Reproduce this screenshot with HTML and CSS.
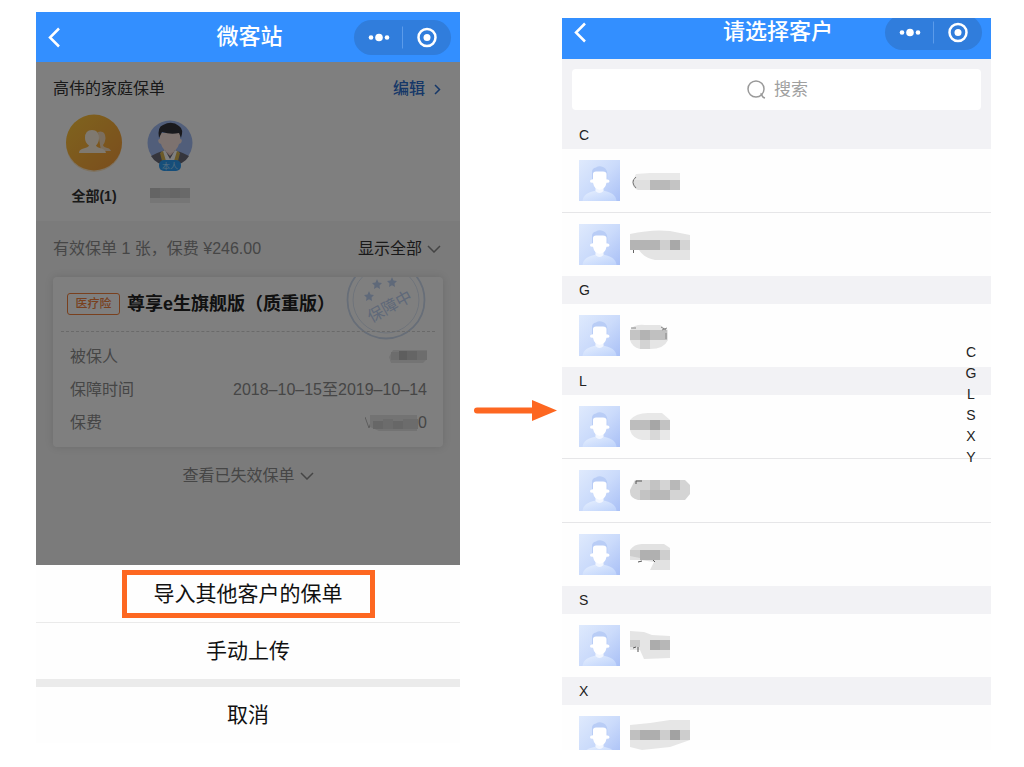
FILE: index.html
```html
<!DOCTYPE html>
<html lang="zh-CN">
<head>
<meta charset="utf-8">
<meta name="viewport" content="width=device-width, initial-scale=1">
<title>微客站</title>
<link rel="stylesheet" href="styles.css">
</head>
<body>
<svg class="defs" width="0" height="0" aria-hidden="true">
  <defs>
    <linearGradient id="g-bg" x1="0" y1="0" x2="1" y2="1"><stop offset="0" stop-color="#dfeafd"/><stop offset=".5" stop-color="#cbdbfb"/><stop offset="1" stop-color="#a9c0f6"/></linearGradient>
    <linearGradient id="g-body" x1="0" y1="0" x2="1" y2="1"><stop offset="0" stop-color="#e6effe"/><stop offset="1" stop-color="#bdd2fb"/></linearGradient>
    <linearGradient id="g-gold" x1="0" y1="0" x2="1" y2="1"><stop offset="0" stop-color="#ffc83c"/><stop offset="1" stop-color="#f59a3a"/></linearGradient>
    <symbol id="avatar" viewBox="0 0 41 41">
      <rect width="41" height="41" fill="url(#g-bg)"/>
      <path d="M13 19V12Q13 8 17 7.500Q20 5.500 24 7Q29 8 28.500 19Z" fill="#b9cdf6"/>
      <path d="M3.500 41C4 35 9 32 17 30.500H24C32 32 37 35 37.500 41Z" fill="url(#g-body)"/>
      <path d="M16.500 26H24.500V31Q20.500 35 16.500 31Z" fill="#f3f7ff"/>
      <path d="M14 14Q14 11.500 17 11.500H24Q27.500 11.500 27.500 14V19.500Q30.500 19 30.500 21.200Q30.500 23 27.500 22.800Q27 26 25 28Q20.500 31.500 16.500 28Q14.500 26 14 22.800Q11 23 11 21.200Q11 19 14 19.500Z" fill="#fff"/>
    </symbol>
    <symbol id="capsule" viewBox="0 0 97 35">
      <circle cx="17" cy="17.500" r="2.300"/><circle cx="25" cy="17.500" r="3.800"/><circle cx="33" cy="17.500" r="2.300"/>
      <path d="M48.500 6.500V28.500" stroke="#5b9bea"/>
      <circle cx="73" cy="17.500" r="8.500" fill="none" stroke="#fff" stroke-width="2.500"/><circle cx="73" cy="17.500" r="3.500"/>
    </symbol>
    <symbol id="chevron" viewBox="0 0 14 8"><path d="M1 1L7 7L13 1" fill="none" stroke="currentColor" stroke-width="1.500"/></symbol>
  </defs>
</svg>
<main class="stage">
  <section class="phone phone-left">
    <header class="bar">
      <button class="back" aria-label="返回"><svg width="13" height="21" viewBox="0 0 13 21"><path d="M11 1.500L2 10.500L11 19.500" fill="none" stroke="#fff" stroke-width="2.500"/></svg></button>
      <h1 class="bar-title">微客站</h1>
      <button class="capsule" aria-label="更多"><svg width="97" height="35" fill="#fff"><use href="#capsule"/></svg></button>
    </header>
    <div class="dimmed">
      <div class="family">
        <div class="family-head">
          <h2 class="family-title">高伟的家庭保单</h2>
          <a class="edit" href="#edit">编辑 <svg width="7" height="11" viewBox="0 0 7 11"><path d="M1 1L5.500 5.500L1 10" fill="none" stroke="currentColor" stroke-width="1.500"/></svg></a>
        </div>
        <div class="members">
          <button class="member">
            <svg width="58" height="58" viewBox="0 0 58 58">
              <circle cx="29" cy="30" r="28" fill="#f8b850" opacity=".35"/>
              <circle cx="29" cy="28.500" r="28" fill="url(#g-gold)"/>
              <path d="M33 18Q40 16 40.500 24Q40 29 38 31Q38 33 44 34.500Q46 36 46 37H36Z" fill="#f7ddbc"/>
              <path d="M27 16Q34 16 34 24Q34 29 31 31.500Q31 33 38 35Q41 37 41 39H14Q14 36 17 35Q24 33 24 31.500Q20 29 20 24Q20 16 27 16Z" fill="#fff3e0"/>
            </svg>
            <span class="member-name">全部(1)</span>
          </button>
          <button class="member" aria-label="本人">
            <svg width="58" height="58" viewBox="0 0 58 58">
              <circle cx="29" cy="29" r="22.500" fill="#a3bdf5"/>
              <path d="M10 42Q18 38 24 36H34Q40 38 48 42Q43 51 29 52Q15 51 10 42Z" fill="#6b6b78"/>
              <path d="M20 38L24 36L29 45L34 36L38 38L34 50H24Z" fill="#fff"/>
              <path d="M19 39L22 37L25 47H21ZM39 39L36 37L33 47H37Z" fill="#d8b550"/>
              <path d="M25 33H33V38L29 42L25 38Z" fill="#f3d0c8"/>
              <path d="M19 19H39V25Q42 25 40 29L38 30Q36 37 29 39Q22 37 20 30L18 29Q16 25 19 25Z" fill="#fbe5df"/>
              <path d="M18 24Q16 13 22 11Q31 6 38 12Q43 15 40 24L38 19Q30 21 21 18Z" fill="#33333b"/>
              <rect x="18" y="46" width="22" height="11" rx="5" fill="#2d9cf4"/>
              <text class="self" x="29" y="55" text-anchor="middle">本人</text>
            </svg>
            <svg class="pix" width="40" height="18" viewBox="0 0 40 18"><path fill="#c8c8c8" d="M0 2H10V12H0Z"/><path fill="#d2d2d2" d="M10 2H20V12H10ZM30 2H40V12H30Z"/><path fill="#cdcdcd" d="M20 2H30V12H20Z"/><path fill="#ececec" d="M0 12H40V17H0Z"/></svg>
          </button>
        </div>
      </div>
      <div class="policies">
        <div class="summary"><p class="muted">有效保单 1 张，保费 ¥246.00</p><button class="filter">显示全部 <svg width="14" height="8"><use href="#chevron"/></svg></button></div>
        <article class="card">
          <svg class="stamp" width="80" height="80" viewBox="0 0 80 80">
            <g fill="none" stroke="#cfdcf0"><circle cx="40" cy="40" r="38.500" stroke-width="1.800"/><circle cx="40" cy="40" r="33" stroke-width=".7"/></g>
            <g fill="#bfd2f2"><path id="star" d="M0-5L1.500-1.500L5-1L2.500 1.500L3 5L0 3.300L-3 5L-2.500 1.500L-5-1L-1.500-1.500Z" transform="translate(23 36)"/><use href="#star" x="8" y="-12"/><use href="#star" x="23" y="-14"/><text class="stamp-text" x="44" y="52" text-anchor="middle" transform="rotate(-29 44 47)">保障中</text></g>
          </svg>
          <div class="card-head"><span class="tag">医疗险</span><h3 class="card-title">尊享e生旗舰版（质重版）</h3></div>
          <dl class="facts">
            <div class="fact"><dt>被保人</dt><dd><svg class="pix" width="38" height="16" viewBox="0 0 38 16"><path fill="#e8e8e8" d="M4 1H38V10L34 14H2L0 8Z"/><path fill="#dadada" d="M2 3H10V11H2ZM28 2H38V11H28Z"/><path fill="#bcbcbc" d="M10 2H18V11H10Z"/><path fill="#cacaca" d="M18 2H28V11H18Z"/></svg></dd></div>
            <div class="fact"><dt>保障时间</dt><dd>2018–10–15至2019–10–14</dd></div>
            <div class="fact"><dt>保费</dt><dd class="fee"><svg class="pix" width="53" height="16" viewBox="0 0 53 16"><path d="M0 2L4 13L7 4" fill="none" stroke="#bbb"/><path fill="#e6e6e6" d="M5 0H52V16H14L5 12Z"/><path fill="#cecece" d="M8 6H18V14H8ZM28 6H38V14H28Z"/><path fill="#d8d8d8" d="M18 4H28V14H18ZM38 4H53V14H38Z"/></svg><span>0</span></dd></div>
          </dl>
        </article>
        <button class="expired">查看已失效保单 <svg width="14" height="8"><use href="#chevron"/></svg></button>
      </div>
    </div>
    <div class="sheet">
      <button class="option"><span class="callout">导入其他客户的保单</span></button>
      <button class="option">手动上传</button>
      <button class="option cancel">取消</button>
    </div>
  </section>

  <div class="arrow"><svg width="84" height="21" viewBox="0 0 84 21" aria-hidden="true"><path d="M4 10.500H62" stroke="#fd6721" stroke-width="6" stroke-linecap="round"/><path d="M59 0L84 10.500L59 21Z" fill="#fd6721"/></svg></div>

  <section class="phone phone-right">
    <header class="bar bar-cut">
      <button class="back" aria-label="返回"><svg width="13" height="21" viewBox="0 0 13 21"><path d="M11 1.500L2 10.500L11 19.500" fill="none" stroke="#fff" stroke-width="2.500"/></svg></button>
      <h1 class="bar-title">请选择客户</h1>
      <button class="capsule" aria-label="更多"><svg width="97" height="35" fill="#fff"><use href="#capsule"/></svg></button>
    </header>
    <div class="search-area">
      <label class="search">
        <svg width="19" height="19" viewBox="0 0 19 19" fill="none" stroke="#999" stroke-width="1.500"><circle cx="9" cy="9" r="8"/><path d="M13.500 13.500Q14.500 14 15 15.500Q15.500 17.500 18 18"/></svg>
        <input class="search-input" type="text" placeholder="搜索" aria-label="搜索">
      </label>
    </div>
    <h2 class="letter" id="C">C</h2>
    <ul class="clients">
      <li class="client"><svg class="avatar"><use href="#avatar"/></svg><svg class="pix" width="60" height="41" viewBox="0 0 60 41"><path fill="#e9e9e9" d="M6 14L20 13H50V20H3Z"/><path fill="#e0e0e0" d="M3 20H20V30H8Q2 28 2 20Z"/><path fill="#b9b9b9" d="M20 20H40V30H20Z"/><path fill="#c4c4c4" d="M40 20H50V30H40Z"/><path d="M6 17Q0 22 6 28" stroke="#777" fill="none"/></svg></li>
      <li class="client"><svg class="avatar"><use href="#avatar"/></svg><svg class="pix" width="60" height="41" viewBox="0 0 60 41"><path fill="#e4e4e4" d="M0 10Q22 5 40 7L60 11V16H0ZM9 26H60V36H25Q14 34 9 26Z"/><path fill="#b4b4b4" d="M0 16H30V26H0Z"/><path fill="#cfcfcf" d="M30 16H40V26H30Z"/><path fill="#a8a8a8" d="M40 16H50V26H40Z"/><path fill="#d4d4d4" d="M50 16H60V26H50Z"/><path d="M3.500 26V29" stroke="#666"/></svg></li>
    </ul>
    <h2 class="letter" id="G">G</h2>
    <ul class="clients">
      <li class="client"><svg class="avatar"><use href="#avatar"/></svg><svg class="pix" width="60" height="41" viewBox="0 0 60 41"><path fill="#e5e5e5" d="M0 15Q4 9 15 10H30L38 15V25Q34 34 20 34H10Q2 32 0 25Z"/><path fill="#c4c4c4" d="M0 15H10V25H0Z"/><path fill="#b3b3b3" d="M10 15H20V25H10Z"/><path fill="#c0c0c0" d="M20 15H37V25H20Z"/><path fill="#d3d3d3" d="M10 25H20V34H10Z"/><path d="M1 13H6M31 12L36 15M32 15L37 13M36 18V24" stroke="#888"/></svg></li>
    </ul>
    <h2 class="letter" id="L">L</h2>
    <ul class="clients">
      <li class="client"><svg class="avatar"><use href="#avatar"/></svg><svg class="pix" width="60" height="41" viewBox="0 0 60 41"><path fill="#e8e8e8" d="M0 14Q6 7 18 7H32L40 14V34H12Q2 32 0 24Z"/><path fill="#bdbdbd" d="M0 14H20V24H0Z"/><path fill="#a6a6a6" d="M20 14H30V24H20Z"/><path fill="#c2c2c2" d="M30 14H40V24H30Z"/><path fill="#d8d8d8" d="M20 24H30V34H20Z"/></svg></li>
      <li class="client"><svg class="avatar"><use href="#avatar"/></svg><svg class="pix" width="60" height="41" viewBox="0 0 60 41"><path fill="#d4d4d4" d="M5 10H55L60 15V24L55 30H8Q0 28 0 22V20Z"/><path fill="#c3c3c3" d="M20 10H30V20H20ZM10 20H20V30H10Z"/><path fill="#b8b8b8" d="M40 10H50V20H40ZM20 20H40V30H20Z"/><path d="M6 14V11H12" stroke="#555" fill="none"/></svg></li>
      <li class="client"><svg class="avatar"><use href="#avatar"/></svg><svg class="pix" width="60" height="41" viewBox="0 0 60 41"><path fill="#e2e2e2" d="M0 16Q4 10 12 10H34L40 14V36H20L24 28L10 26H0Z"/><path fill="#cecece" d="M0 16H10V24L0 22ZM30 16H40V26H30Z"/><path fill="#b0b0b0" d="M10 16H30V26H10Z"/><path d="M8 28L12 27M23 26L25 28" stroke="#555"/></svg></li>
    </ul>
    <h2 class="letter" id="S">S</h2>
    <ul class="clients">
      <li class="client"><svg class="avatar"><use href="#avatar"/></svg><svg class="pix" width="60" height="41" viewBox="0 0 60 41"><path fill="#e5e5e5" d="M0 6L14 7L22 10L40 11V33L14 34L10 25H0Z"/><path fill="#cacaca" d="M0 15H10V22H0Z"/><path fill="#acacac" d="M20 15H30V25H20Z"/><path fill="#b7b7b7" d="M30 15H40V25H30Z"/><path d="M3 23L6 22M8 22V27" stroke="#555"/></svg></li>
    </ul>
    <h2 class="letter" id="X">X</h2>
    <ul class="clients">
      <li class="client client-cut"><svg class="avatar"><use href="#avatar"/></svg><svg class="pix" width="60" height="41" viewBox="0 0 60 41"><path fill="#e6e6e6" d="M0 9L20 7L40 4H60V24L40 31L12 34L0 31Z"/><path fill="#c0c0c0" d="M0 14H10V24H0Z"/><path fill="#aeaeae" d="M10 14H30V24H10Z"/><path fill="#cdcdcd" d="M30 14H40V24H30ZM50 14H60V24H50Z"/><path fill="#a2a2a2" d="M40 14H50V24H40Z"/></svg></li>
    </ul>
    <nav class="index" aria-label="字母索引"><a href="#C">C</a><a href="#G">G</a><a href="#L">L</a><a href="#S">S</a><a href="#X">X</a><a href="#Y">Y</a></nav>
  </section>
</main>
</body>
</html>
```
FILE: styles.css
```css
* { box-sizing: border-box; }
body { margin: 0; background: #fff; color: #222; font: 16px/24px "Liberation Sans", "Noto Sans CJK SC", sans-serif; }
h1, h2, h3, p, ul, dl, dd { margin: 0; padding: 0; font-weight: 400; }
ul { list-style: none; }
button { border: 0; padding: 0; background: none; font: inherit; color: inherit; cursor: pointer; }
a { color: inherit; text-decoration: none; }
svg { display: block; flex: none; }
.defs { position: absolute; }

.stage { display: grid; grid-template-columns: 424fr 102px 429fr; align-items: start; padding: 0 33px 16px 36px; }
.phone { position: relative; min-width: 0; }
.phone-left { margin-top: 12px; }
.phone-right { margin-top: 18px; background: #fefefe; }
.arrow { display: flex; justify-content: flex-end; padding: 400px 5px 0 0; }

.bar { display: grid; grid-template-columns: 1fr auto 1fr; align-items: center; height: 50px; padding: 0 9px 0 12px; background: #338fff; color: #fff; overflow: hidden; }
.bar-cut { height: 41px; padding-bottom: 13px; align-content: center; }
.back { justify-self: start; }
.bar-title { font-size: 22px; line-height: 28px; font-weight: 500; }
.capsule { justify-self: end; border-radius: 18px; background: #307ddc; }

.dimmed { position: relative; background: #fff; }
.dimmed::after { content: ""; position: absolute; inset: 0; background: rgba(0, 0, 0, .5); pointer-events: none; }
.family { height: 159px; padding: 15px 19px 0 17px; }
.family-head, .summary { display: flex; justify-content: space-between; align-items: center; }
.family-title { font-size: 16px; color: #333; }
.edit { display: flex; align-items: center; gap: 9px; color: #2c6fd0; font-weight: 500; }
.members { display: flex; gap: 18px; padding: 13px 0 0 12px; }
.member { display: flex; flex-direction: column; align-items: center; gap: 12px; width: 58px; }
.member-name { font-size: 14px; line-height: 24px; font-weight: 700; color: #333; }
.member .pix { margin-top: 2px; }
.self { font-size: 8px; fill: #a8dcff; }
.policies { padding: 16px 17px 77px; background: #f6f6f6; }
.summary { padding-right: 2px; margin-bottom: 16px; }
.muted { color: #8c8c8c; }
.filter, .expired { display: flex; align-items: center; gap: 5px; }
.filter { color: #333; }
.filter svg { color: #888; }
.card { position: relative; height: 170px; border-radius: 4px; background: #fff; box-shadow: 0 0 8px rgba(0, 0, 0, .12); overflow: hidden; }
.stamp { position: absolute; top: -17px; right: 17px; }
.stamp-text { font-size: 16px; }
.card-head { position: relative; display: flex; align-items: center; gap: 7px; height: 55px; margin: 0 8px; padding-left: 6px; border-bottom: 1px dashed #d4d4d4; }
.tag { width: 53px; border: 1px solid #f2813c; border-radius: 3px; color: #f2813c; font-size: 12px; line-height: 20px; text-align: center; font-weight: 500; }
.card-title { font-size: 18px; font-weight: 700; white-space: nowrap; color: #222; }
.facts { padding: 8px 16px 0 17px; color: #8c8c8c; }
.fact { display: flex; justify-content: space-between; align-items: center; height: 33px; }
.fee { display: flex; align-items: center; }
.expired { margin: 17px auto 0; color: #8c8c8c; }

.sheet { background: #fefefe; }
.option { display: flex; align-items: center; justify-content: center; width: 100%; height: 57px; font-size: 21px; line-height: 38px; color: #111; }
.option + .option { border-top: 1px solid #eaeaea; }
.option + .cancel { height: 64px; border-top: 8px solid #ebebeb; }
.callout { padding: 0 27px; border: 5px solid #fd6721; min-width: 253px; white-space: nowrap; }

.search-area { padding: 10px 10px 11px; background: #f2f2f5; }
.search { display: flex; align-items: center; justify-content: center; gap: 8px; height: 41px; padding-left: 4px; border-radius: 4px; background: #fff; }
.search-input { width: 36px; padding: 0; border: 0; outline: 0; background: none; font: inherit; font-size: 17px; }
.search-input::placeholder { color: #a0a0a0; opacity: 1; }
.letter { height: 28px; padding-left: 17px; background: #f2f2f5; font-size: 14px; line-height: 28px; color: #222; }
.client { display: flex; gap: 10px; padding: 11px 17px; }
.client + .client { border-top: 1px solid #e6e6e8; }
.avatar { width: 41px; height: 41px; }
.client-cut { height: 45px; padding-bottom: 0; overflow: hidden; }
.index { position: absolute; right: 12px; top: 324px; display: flex; flex-direction: column; width: 16px; font-size: 14px; line-height: 21px; text-align: center; }
```
